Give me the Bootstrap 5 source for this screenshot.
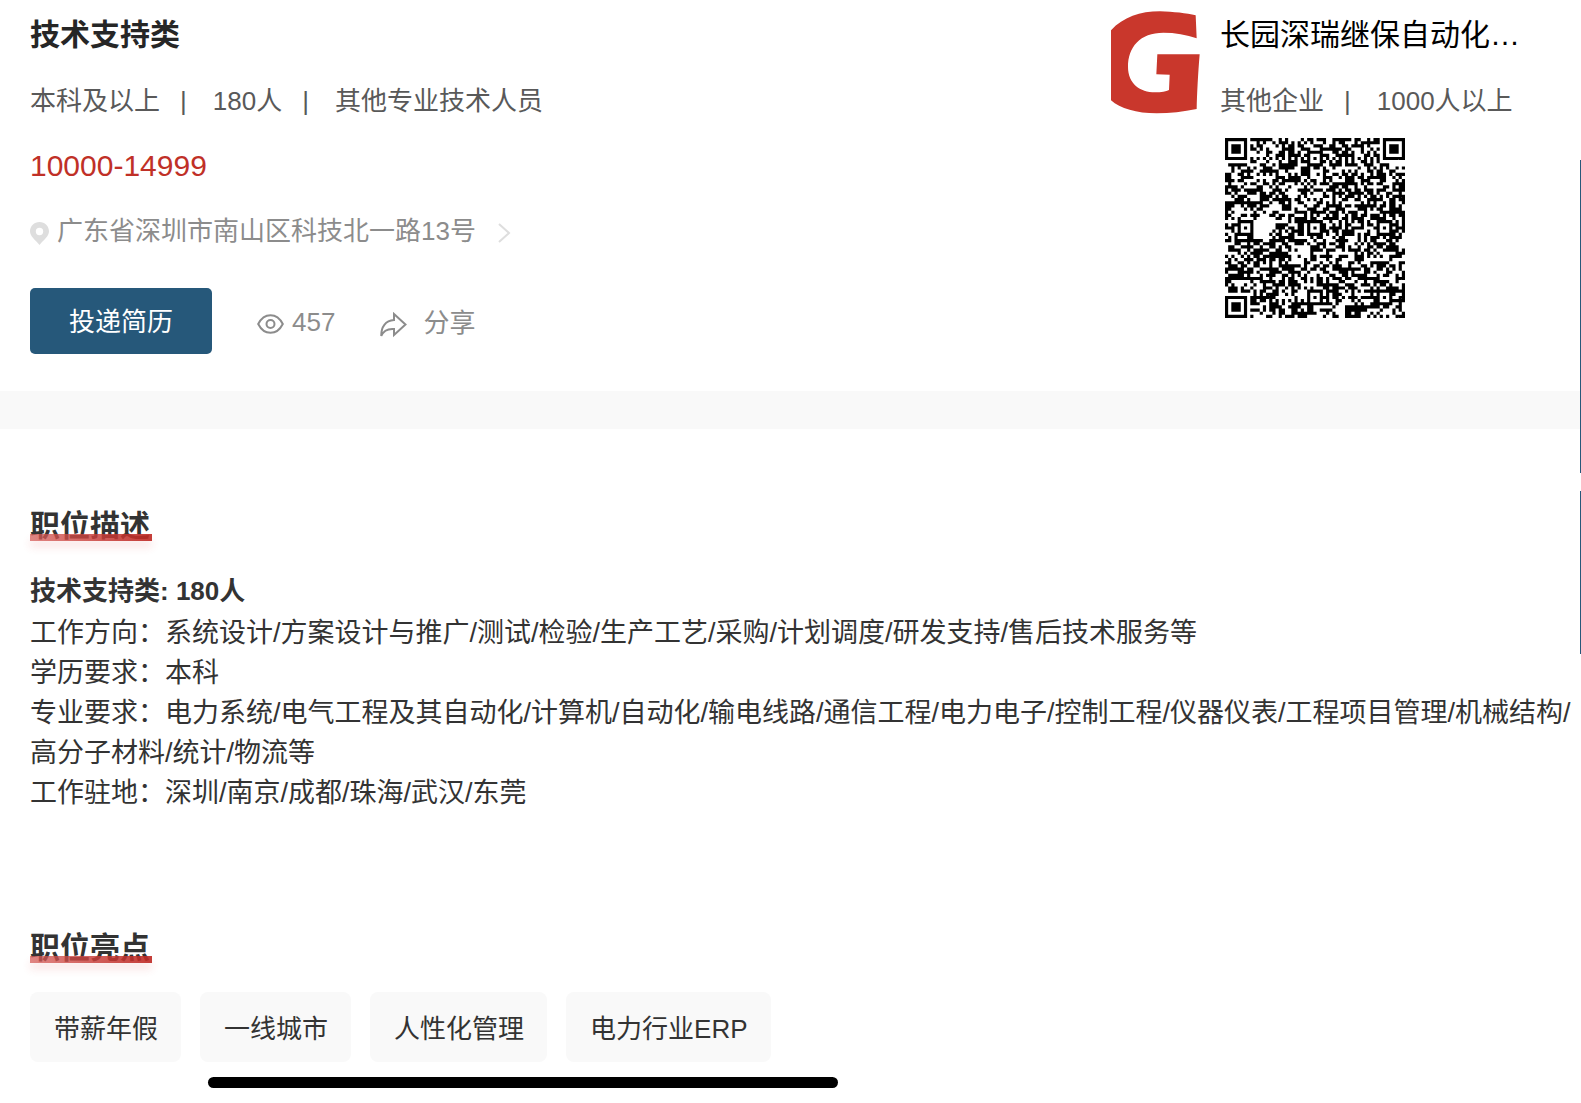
<!DOCTYPE html>
<html lang="zh-CN">
<head>
<meta charset="utf-8">
<meta name="viewport" content="width=device-width, initial-scale=1">
<title>技术支持类</title>
<link href="https://cdn.jsdelivr.net/npm/bootstrap@5.3.0/dist/css/bootstrap.min.css" rel="stylesheet">
<style>
body{font-family:"Liberation Sans","Noto Sans CJK SC",sans-serif;font-size:26px;line-height:40px;color:#333;background:#fff;position:relative;overflow-x:hidden}
.job-head{padding:2px 30px 37px}
.line-row{min-height:66px;line-height:66px}
.job-title{font-size:30px;font-weight:700;color:#262626;margin:0;line-height:66px}
.meta-list{color:#595959;gap:20px}
.meta-list .sep{margin-right:6px}
.pay{font-size:30px;color:#c03027;line-height:64px}
.place{color:#8c8c8c;text-decoration:none;gap:8px}
.place svg{margin-top:4px}
.place .arrow{margin-left:14px}
.job-actions{margin-top:24px;gap:45px;color:#8c8c8c}
.job-actions svg{margin-top:4px}
.job-actions span{padding-top:1px}
.btn-apply{background:#26587a;color:#fff;border:0;border-radius:5px;font-size:26px;width:182px;height:66px;padding:3px 0 0}
.btn-apply:hover{background:#1d4a69;color:#fff}
.btn-share{font-size:26px;color:#8c8c8c;border:0;padding:3px 0 0;gap:16px}
.firm{width:440px;gap:20px}
.firm-name{font-size:30px;color:#000;width:304px;text-decoration:none}
.qr-code{margin:4px 0 0 5px}
.band{height:38px;background:#f9f9f9}
.job-body{padding:77px 8px 0 30px}
.sec-title{font-size:30px;font-weight:700;line-height:40px;margin:0;position:relative;display:inline-block}
.sec-title::after{content:"";position:absolute;left:0;right:-2px;bottom:5px;height:7px;background:linear-gradient(90deg,rgba(214,92,88,.75),rgba(190,40,35,.9));box-shadow:0 6px 8px rgba(220,60,60,.14)}
.role{font-weight:700;line-height:44px;margin:22px 0 0}
.desc{font-size:27px;margin-bottom:115px}
.perks{gap:19px;margin-top:23px;padding:0;list-style:none}
.perks li{background:#f9f9f9;border-radius:8px;padding:17px 23px 13px 24px}
.home-bar{width:630px;height:11px;border-radius:6px;background:#000;margin:15px 0 0 178px}
.side-tab{position:absolute;right:0;width:1px;background:#26587a}
.tab-a{top:160px;height:313px}
.tab-b{top:491px;height:163px}
</style>
<script src="https://cdn.jsdelivr.net/npm/bootstrap@5.3.0/dist/js/bootstrap.bundle.min.js"></script>
</head>
<body>
<header class="job-head d-flex justify-content-between">
  <div>
    <h1 class="job-title">技术支持类</h1>
    <div class="meta-list line-row d-flex"><span>本科及以上</span><span class="sep">|</span><span>180人</span><span class="sep">|</span><span>其他专业技术人员</span></div>
    <div class="pay">10000-14999</div>
    <a href="#" class="place line-row d-flex align-items-center">
      <svg width="19" height="23" viewBox="0 0 19 23"><path fill="#dedede" fill-rule="evenodd" d="M9.500 0C4.200 0 0 4.100 0 9.300c0 5.200 5.200 8.500 9.500 13.700C13.800 17.800 19 14.500 19 9.300 19 4.100 14.800 0 9.500 0zm0 5.800a3.700 3.700 0 1 1 0 7.400 3.700 3.700 0 0 1 0-7.400z"/></svg>
      <span>广东省深圳市南山区科技北一路13号</span>
      <svg class="arrow" width="13" height="20" viewBox="0 0 13 20"><path d="M1 1l10 9-10 9" fill="none" stroke="#dedede" stroke-width="2"/></svg>
    </a>
    <div class="job-actions d-flex align-items-center">
      <button type="button" class="btn btn-apply">投递简历</button>
      <span class="d-flex align-items-center gap-2">
        <svg width="27" height="20" viewBox="0 0 27 20" fill="none" stroke="#8c8c8c" stroke-width="2"><path d="M1.200 10C4 4.500 8.500 1.200 13.500 1.200S23 4.500 25.800 10C23 15.500 18.500 18.800 13.500 18.800S4 15.500 1.200 10z"/><circle cx="13.500" cy="10" r="4"/></svg>
        <span>457</span>
      </span>
      <button type="button" class="btn btn-share d-flex align-items-center">
        <svg width="27" height="26" viewBox="0 0 27 26"><path d="M14 2l11.500 10.500L14 23v-6C8 16.500 3.500 18.500 1.300 24 1 15 5.500 8.500 14 8z" fill="none" stroke="#8c8c8c" stroke-width="2"/></svg>
        <span>分享</span>
      </button>
    </div>
  </div>
  <aside class="firm d-flex">
    <svg class="mt-2 flex-shrink-0" width="89" height="104" viewBox="63 29 267 312" role="img" aria-label="G"><path fill="#c9372c" d="M63 90C100 50 150 33 210 33c40 1 80 6 107 12l3 69c-30-11-65-17-100-17-70 0-106 43-106 103 0 50 36 76 81 76 20 0 33-3 42-7l2-46-40-1 3-60h127c-5 58-8 118-9 164-40 8-80 13-120 13-60 0-110-14-137-39z"/></svg>
    <div>
      <a href="#" class="firm-name line-row d-block">长园深瑞继保自动化…</a>
      <div class="meta-list line-row d-flex"><span>其他企业</span><span class="sep">|</span><span>1000人以上</span></div>
      <svg id="qr" class="qr-code d-block" width="180" height="180" viewBox="0 0 57 57" role="img" aria-label="二维码"></svg>
    </div>
  </aside>
</header>
<div class="band"></div>
<main class="job-body">
  <h2 class="sec-title">职位描述</h2>
  <p class="role">技术支持类: 180人</p>
  <p class="desc">工作方向：系统设计/方案设计与推广/测试/检验/生产工艺/采购/计划调度/研发支持/售后技术服务等<br>学历要求：本科<br>专业要求：电力系统/电气工程及其自动化/计算机/自动化/输电线路/通信工程/电力电子/控制工程/仪器仪表/工程项目管理/机械结构/<br>高分子材料/统计/物流等<br>工作驻地：深圳/南京/成都/珠海/武汉/东莞</p>
  <h2 class="sec-title">职位亮点</h2>
  <ul class="perks d-flex flex-wrap mb-0"><li>带薪年假</li><li>一线城市</li><li>人性化管理</li><li>电力行业ERP</li></ul>
  <div class="home-bar"></div>
</main>
<div class="side-tab tab-a"></div>
<div class="side-tab tab-b"></div>
<script>
// Paints the 57-module company code: finders, timing and alignment marks, then data modules.
(function(){
  var n=57,seed=20457,d='';
  function rnd(){seed=(seed*1103515245+12345)%2147483648;return seed/2147483648;}
  function ring(x,y,cx,cy){return Math.max(Math.abs(x-cx),Math.abs(y-cy));}
  var finders=[[3,3],[53,3],[3,53]],aligns=[[28,6],[50,28],[6,28],[28,28],[28,50],[50,50]];
  for(var y=0;y<n;y++)for(var x=0;x<n;x++){
    var on=rnd()>0.46,fixed=false;
    finders.forEach(function(f){var r=ring(x,y,f[0],f[1]);if(r<=4){on=r!==2&&r!==4;fixed=true;}});
    if(!fixed)aligns.forEach(function(a){var r=ring(x,y,a[0],a[1]);if(r<=2){on=r!==1;fixed=true;}});
    if(!fixed&&(x===6||y===6))on=(x+y)%2===0;
    if(!fixed&&Math.hypot(x-12,y-27)<3.500)on=false;
    if(on)d+='M'+x+' '+y+'h1v1h-1z';
  }
  var p=document.createElementNS('http://www.w3.org/2000/svg','path');
  p.setAttribute('d',d);
  document.getElementById('qr').appendChild(p);
})();
</script>
</body>
</html>
